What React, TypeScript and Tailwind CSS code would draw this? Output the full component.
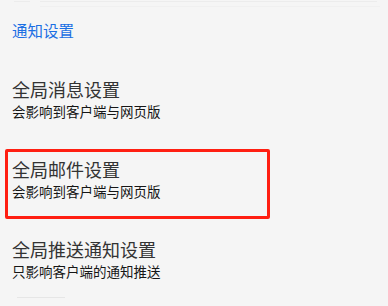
import React from "react";

const items = [
  { title: "全局消息设置", sub: "会影响到客户端与网页版", marked: false },
  { title: "全局邮件设置", sub: "会影响到客户端与网页版", marked: true },
  { title: "全局推送通知设置", sub: "只影响客户端的通知推送", marked: false },
];

export default function App() {
  return (
    <div
      className="w-[388px] h-[306px] overflow-hidden bg-[#f5f5f5]"
      style={{ fontFamily: '"Noto Sans CJK SC", "Noto Sans", sans-serif' }}
    >
      <div className="h-[20px] pt-[1px] flex flex-col gap-[4px]">
        <div className="flex gap-[10px] pl-[14px]">
          <div className="h-[1px] w-[16px] bg-[#ececec]" />
          <div className="h-[1px] w-[337px] bg-[#ececec]" />
        </div>
        <div className="flex pl-[40px]">
          <div className="h-[1px] w-[340px] bg-[#f0f0f0]" />
        </div>
      </div>
      <div className="h-[20px] leading-[20px] pl-[12px] text-[15.5px] text-[#1b6fe3]">
        通知设置
      </div>
      <div className="h-[17px]" />
      {items.map((it) => (
        <div key={it.title} className="relative h-[80px] pt-[20px] pl-[12px]">
          <div className="h-[24px] leading-[24px] text-[18px] text-[#333333]">
            {it.title}
          </div>
          <div className="h-[20px] leading-[20px] text-[13.5px] text-[#161616]">
            {it.sub}
          </div>
          {it.marked && (
            <div className="absolute top-[12px] left-[5px] w-[265px] h-[70px] border-[3px] border-[#ff1f12] rounded-[2px]" />
          )}
        </div>
      ))}
      <div className="pl-[17px]">
        <div className="h-[1px] w-[48px] bg-[#e6e6e6]" />
      </div>
    </div>
  );
}
